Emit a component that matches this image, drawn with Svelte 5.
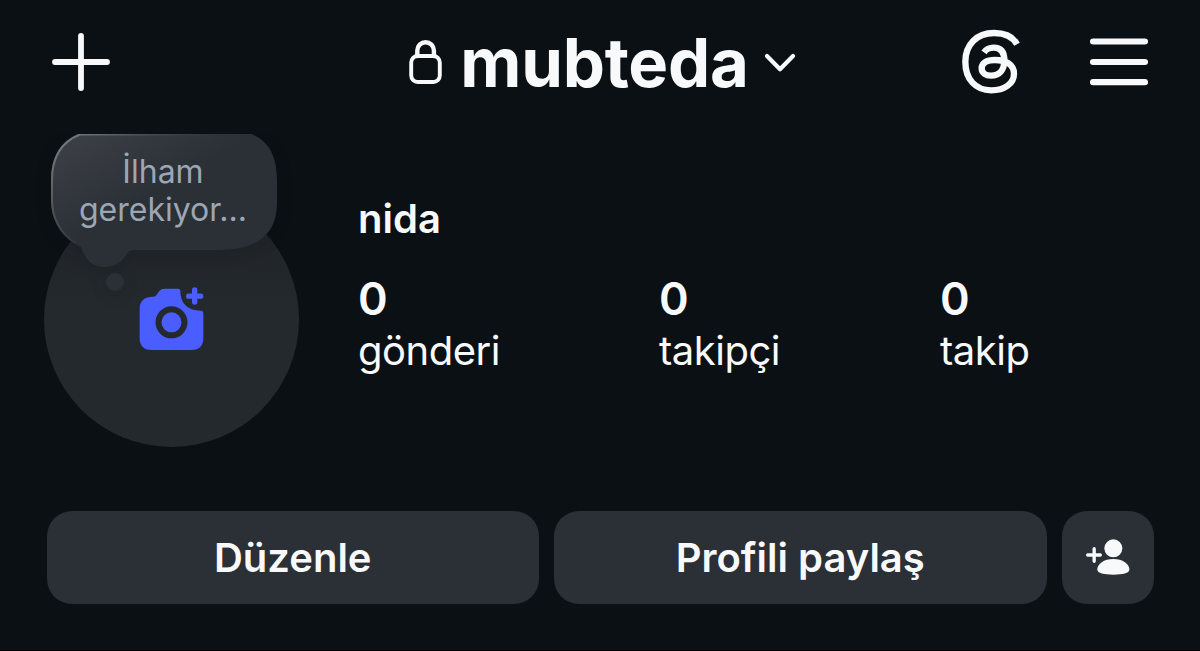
<script lang="ts">
	let {
		username = 'mubteda',
		name = 'nida',
		note = ['İlham', 'gerekiyor...'],
		stats = [
			{ label: 'gönderi', count: 0 },
			{ label: 'takipçi', count: 0 },
			{ label: 'takip', count: 0 }
		]
	}: {
		username?: string;
		name?: string;
		note?: string[];
		stats?: { label: string; count: number }[];
	} = $props();
</script>

<div class="screen">
	<header class="top-bar">
		<button class="icon-btn" aria-label="Oluştur">
			<svg width="58" height="58" viewBox="0 0 58 58">
				<path d="M29 3v52M3 29h52" class="line" stroke-width="5.8" />
			</svg>
		</button>

		<button class="account">
			<svg class="lock" width="33" height="46" viewBox="0 0 33 46">
				<path d="M8.3 17v-5.5a8.3 8.3 0 0 1 16.6 0V17" class="line" stroke-width="4.4" />
				<rect x="2.2" y="17" width="28.6" height="26" rx="6.5" class="line" stroke-width="3.9" />
			</svg>
			<span class="username">{username}</span>
			<svg class="chevron" width="32" height="20" viewBox="0 0 32 20">
				<path d="M3 3l13 13.2L29 3" class="line" stroke-width="4.2" />
			</svg>
		</button>

		<div class="actions">
			<button class="icon-btn" aria-label="Threads">
				<svg width="60" height="66" viewBox="63 57 180 198">
					<path
						d="M231 103C219 80 194 69 162 69C110 69 76 104 76 155C76 207 106 241 154 241C193 241 222 221 222 191C222 164 198 150 165 150C139 150 125 159 125 175C125 189 137 197 153 197C178 197 193 180 193 151C193 125 182 113 161 113C147 113 139 117 132 127"
						class="line threads"
						stroke-width="19"
					/>
				</svg>
			</button>
			<button class="icon-btn" aria-label="Menü">
				<svg width="58" height="48" viewBox="0 0 58 48">
					<path d="M3 3.5h52M3 24h52M3 44.2h52" class="line" stroke-width="6.2" />
				</svg>
			</button>
		</div>
	</header>

	<section class="profile">
		<div class="avatar">
			<svg class="camera" width="66" height="64" viewBox="148 142 198 192">
				<path
					d="M225 147H266Q272 147 272 154C272 190 292 212 334 213Q341 213 341 220V295Q341 331 305 331H186Q150 331 150 295V207C150 182 166 171 190 171C206 171 203 147 225 147Z"
				/>
				<circle cx="245.5" cy="248" r="39" class="lens" />
				<path d="M315 151v36M297 169.5h36" class="plus" />
			</svg>

			<div class="note">
				<svg class="bubble" width="240" height="160" viewBox="44 134 240 160">
					<defs>
						<linearGradient id="shine" gradientUnits="userSpaceOnUse" x1="75" y1="125" x2="125" y2="210">
							<stop offset="0" stop-color="#3d4147" />
							<stop offset="1" stop-color="#2b2f36" />
						</linearGradient>
						<linearGradient id="edge" gradientUnits="userSpaceOnUse" x1="60" y1="140" x2="130" y2="215">
							<stop offset="0" stop-color="#777b7f" />
							<stop offset="0.45" stop-color="#50545a" />
							<stop offset="1" stop-color="#3b3f46" stop-opacity="0" />
						</linearGradient>
					</defs>
					<path
						d="M80 133C60 141 51 157 51 180V200C51 222 63 239 81 247C85 260 93 267 104 267C115 267 122 262 126 255Q128 250 135 250H217C256 250 277 236 277 202V181C277 156 269 140 249 133Z"
						fill="url(#shine)"
					/>
					<path d="M249 134.5H80C61 142 52 157 52 180V200C52 217 60 234 76 243" fill="none" stroke="url(#edge)" stroke-width="2" />
					<circle cx="115" cy="282" r="9" fill="#2b2f36" />
				</svg>
				<p class="note-text">
					{#each note as line}
						<span>{line}</span>
					{/each}
				</p>
			</div>
		</div>

		<div class="info">
			<h1 class="name">{name}</h1>
			<div class="stats">
				{#each stats as { label, count }}
					<div class="stat">
						<span class="count">{count}</span>
						<span class="label">{label}</span>
					</div>
				{/each}
			</div>
		</div>
	</section>

	<div class="buttons">
		<button class="btn"><span>Düzenle</span></button>
		<button class="btn"><span>Profili paylaş</span></button>
		<button class="btn square" aria-label="Kişileri keşfet">
			<svg width="44" height="37" viewBox="107 118 132 111">
				<circle cx="189" cy="146" r="27" />
				<path d="M189 178C217 178 237 193 237 209C237 222 217 225 189 225C161 225 141 222 141 209C141 193 161 178 189 178Z" />
				<path d="M131.5 147v38M112 166h38" class="line" stroke-width="10" />
			</svg>
		</button>
	</div>
</div>

<style>
	:global(body) {
		margin: 0;
		background: #0b1014;
	}

	.screen {
		box-sizing: border-box;
		width: 1200px;
		height: 651px;
		overflow: hidden;
		background: #0b1014;
		border-bottom: 1px solid #000;
		color: #f7f9fb;
		font-family: Inter, 'Liberation Sans', sans-serif;
	}

	button {
		padding: 0;
		border: none;
		background: none;
		color: inherit;
		font: inherit;
		cursor: pointer;
	}

	svg {
		display: block;
		flex: none;
		fill: #f7f9fb;
	}

	.line {
		fill: none;
		stroke: #f7f9fb;
		stroke-linecap: round;
		stroke-linejoin: round;
	}

	.threads {
		stroke-linecap: butt;
	}

	.top-bar {
		display: grid;
		grid-template-columns: 1fr auto 1fr;
		align-items: center;
		box-sizing: border-box;
		height: 134px;
		padding: 0 52px 10px;
	}

	.icon-btn {
		justify-self: start;
	}

	.account {
		display: flex;
		align-items: center;
		margin-left: 5px;
	}

	.username {
		margin: 2px 15px 0 18px;
		font-size: 67px;
		font-weight: 700;
		line-height: 80px;
		letter-spacing: -0.2px;
	}

	.chevron {
		margin-top: 1px;
	}

	.actions {
		display: flex;
		align-items: center;
		justify-content: flex-end;
		gap: 69px;
	}

	.profile {
		display: flex;
		height: 377px;
		overflow: hidden;
	}

	.avatar {
		position: relative;
		display: flex;
		flex: none;
		align-items: center;
		justify-content: center;
		width: 255px;
		height: 255px;
		margin: 58px 0 0 44px;
		border-radius: 50%;
		background: linear-gradient(#202429 15%, #24292d 45%);
	}

	.camera {
		margin: 0 0 1px 1px;
		fill: #4a5dff;
	}

	.lens {
		stroke: #24292d;
		stroke-width: 18;
	}

	.plus {
		stroke: #4a5dff;
		stroke-width: 16;
		stroke-linecap: round;
	}

	.note {
		position: absolute;
		top: -58px;
		left: 0;
		width: 240px;
		height: 160px;
	}

	.bubble {
		position: absolute;
		inset: 0;
		filter: drop-shadow(0 3px 8px rgba(0, 0, 0, 0.12));
	}

	.note-text {
		position: relative;
		display: flex;
		flex-direction: column;
		align-items: center;
		margin: 19px 2px 0 0;
		font-size: 32px;
		line-height: 38px;
		color: #9da6b3;
	}

	.info {
		margin-left: 59px;
		padding-top: 60px;
	}

	.name {
		margin: 0;
		font-size: 40px;
		font-weight: 600;
		line-height: 50px;
	}

	.stats {
		display: grid;
		grid-template-columns: 301px 281px auto;
		margin-top: 28px;
	}

	.stat {
		display: flex;
		flex-direction: column;
	}

	.count {
		font-size: 45px;
		font-weight: 600;
		line-height: 54px;
		letter-spacing: -0.5px;
	}

	.label {
		font-size: 40px;
		line-height: 50px;
		letter-spacing: -0.5px;
	}

	.buttons {
		display: flex;
		gap: 15px;
		padding: 0 46.5px;
	}

	.btn {
		display: flex;
		flex: 1;
		align-items: center;
		justify-content: center;
		height: 92.5px;
		border-radius: 25px;
		background: #2b2f36;
		font-size: 40px;
		font-weight: 600;
	}

	.square {
		flex: 0 0 92px;
	}
</style>
